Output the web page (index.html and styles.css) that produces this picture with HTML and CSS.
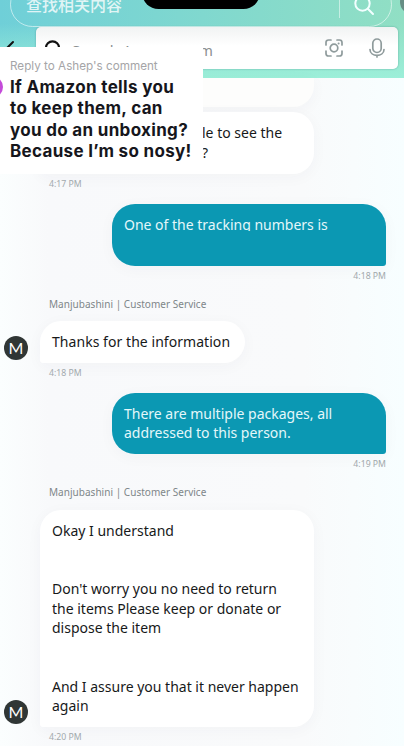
FILE: index.html
```html
<!DOCTYPE html>
<html lang="en">
<head>
  <meta charset="UTF-8">
  <meta name="viewport" content="width=device-width, initial-scale=1.0">
  <title>Customer Service chat</title>
  <link rel="stylesheet" href="styles.css">
</head>
<body>
<div class="phone">
  <header class="header">
    <svg class="back" width="14" height="20" viewBox="0 0 14 20"><path d="M10 3 L3 10 L10 17"/></svg>
    <div class="search">
      <svg class="search-icon" width="22" height="22" viewBox="0 0 22 22"><circle cx="8.500" cy="8" r="6.600"/><path d="M13.500 13 L20 19"/></svg>
      <span class="search-text">Search Amazon.com</span>
      <svg class="scan" width="20" height="20" viewBox="0 0 20 20">
        <path d="M2 7V4.500Q2 2 4.500 2H7M13 2H15.500Q18 2 18 4.500V7M18 13V15.500Q18 18 15.500 18H13M7 18H4.500Q2 18 2 15.500V13"/>
        <circle cx="10" cy="10" r="3.800"/><circle class="dot" cx="14.600" cy="5.600" r="1"/>
      </svg>
      <svg class="mic" width="18" height="22" viewBox="0 0 18 22">
        <rect x="4.800" y="2" width="8.400" height="13.500" rx="4.200"/>
        <path d="M2 12.500C2 20.300 16 20.300 16 12.500M9 18.500V20"/>
      </svg>
    </div>
  </header>

  <main class="chat">
    <div class="bubble previous"></div>
    <div class="bubble first"><span>le to see the</span><br><span>?</span></div>
    <div class="time">4:17 PM</div>

    <div class="bubble mine">One of the tracking numbers is<i class="redact"></i></div>
    <div class="time right">4:18 PM</div>

    <div class="name">Manjubashini | Customer Service</div>
    <div class="row">
      <div class="avatar">M</div>
      <div class="bubble thanks">Thanks for the information</div>
    </div>
    <div class="time">4:18 PM</div>

    <div class="bubble mine">There are multiple packages, all<br>addressed to this person.</div>
    <div class="time right">4:19 PM</div>

    <div class="name">Manjubashini | Customer Service</div>
    <div class="row">
      <div class="avatar">M</div>
      <div class="bubble wide">Okay I understand<br><br><br>Don't worry you no need to return<br>the items Please keep or donate or<br>dispose the item<br><br><br>And I assure you that it never happen<br>again</div>
    </div>
    <div class="time">4:20 PM</div>
  </main>

  <!-- video app controls over the chat -->
  <div class="top-search">
    <span class="top-text">查找相关内容</span>
    <i class="divider"></i>
    <svg width="22" height="22" viewBox="0 0 22 22"><circle cx="9.500" cy="9.500" r="7.200"/><path d="M14.800 14.800 L20 20"/></svg>
  </div>
  <div class="notch"></div>
  <div class="corner"></div>

  <div class="reply">
    <div class="reply-dot"></div>
    <div class="reply-to">Reply to Ashep's comment</div>
    <div class="reply-text">If Amazon tells you<br>to keep them, can<br>you do an unboxing?<br>Because I’m so nosy!</div>
  </div>
</div>
</body>
</html>
```
FILE: styles.css
```css
* {
    box-sizing: border-box;
}
body {
    margin: 0;
    font-family: "Noto Sans", "Noto Sans CJK SC", sans-serif;
}
.phone {
    position: relative;
    width: 404px;
    height: 746px;
    overflow: hidden;
    background: linear-gradient(90deg, #fbfefe 0, #f8f9fb 12%, #f9fafb 75%, #f7feff 100%);
}
svg {
    fill: none;
    stroke-linecap: round;
    flex: none;
}

/* header */
.header {
    display: flex;
    height: 78px;
    padding: 27px 6px 9px 3px;
    background: linear-gradient(180deg, rgba(155, 240, 215, 0) 30%, #9cefd9 100%), linear-gradient(90deg, #6fcfd8, #80d8cf 50%, #91dfc4);
}
.back {
    margin-top: 12px;
    stroke: #111;
    stroke-width: 2;
}
.search {
    display: flex;
    align-items: center;
    flex: 1;
    margin-left: 19px;
    padding: 0 12px 0 8px;
    border-radius: 5px;
    background: linear-gradient(#f1f3f3, #fff 45%);
    box-shadow: 0 0 2px rgba(60, 120, 120, 0.6);
}
.search-icon {
    margin-top: 5px;
    stroke: #111;
    stroke-width: 2.2;
}
.search-text {
    flex: 1;
    margin: 3px 0 0 6px;
    font-size: 14.6px;
    letter-spacing: 0.1px;
    white-space: nowrap;
    color: #8b8f90;
}
.scan, .mic {
    stroke: #8f9b9c;
    stroke-width: 1.7;
}
.scan .dot {
    fill: #8f9b9c;
    stroke: none;
}
.mic {
    margin-left: 24px;
}

/* messages */
.chat {
    display: flex;
    flex-direction: column;
    align-items: flex-start;
}
.bubble {
    padding: 11px 12px;
    border-radius: 21px 21px 21px 3px;
    background: #fff;
    box-shadow: 0 3px 16px rgba(50, 60, 90, 0.035);
    color: #17191a;
    font-size: 14px;
    line-height: 19.5px;
    white-space: nowrap;
}
.previous {
    width: 274px;
    height: 29px;
    margin: 0 0 5px 40px;
    border-radius: 0 0 21px 3px;
    background: #fdfdfc;
}
.first {
    width: 274px;
    height: 62px;
    margin-left: 40px;
    padding-left: 162px;
}
.mine {
    position: relative;
    align-self: flex-end;
    width: 274px;
    height: 61.5px;
    margin: 10px 18px 0 0;
    border-radius: 23px 23px 3px 23px;
    background: #0b98b3;
    color: #e4f7fa;
}
.redact {
    position: absolute;
    left: 12px;
    top: 27px;
    width: 215px;
    height: 12px;
    background: #0b98b3;
}
.row {
    display: flex;
    align-items: flex-end;
    padding-left: 4px;
}
.avatar {
    width: 24px;
    height: 24px;
    margin: 0 12px 3px 0;
    border-radius: 50%;
    background: #303635;
    color: #fff;
    font-family: Lato, sans-serif;
    font-size: 16px;
    line-height: 24px;
    text-align: center;
}
.thanks {
    width: 205px;
    letter-spacing: 0.05px;
}
.wide {
    width: 274px;
}
.time {
    height: 20px;
    margin-left: 49px;
    color: #a2a9ad;
    font-size: 8.7px;
    line-height: 21px;
}
.time.right {
    align-self: flex-end;
    margin: 0 18px 0 0;
}
.name {
    height: 35.5px;
    margin-left: 49px;
    color: #7e8689;
    font-size: 10px;
    letter-spacing: 0.03px;
    line-height: 36px;
}

/* app search bar */
.top-search {
    position: absolute;
    left: 10px;
    top: -18px;
    display: flex;
    align-items: center;
    width: 382px;
    height: 45px;
    padding: 0 16px 0 15px;
    border: 1px solid rgba(255, 255, 255, 0.55);
    border-radius: 23px;
    stroke: #f2ffff;
    stroke-width: 2;
}
.top-text {
    flex: 1;
    margin-top: -2px;
    color: rgba(255, 255, 255, 0.8);
    font-size: 16px;
    font-weight: 500;
}
.divider {
    width: 1px;
    height: 30px;
    margin: -4px 13px 0 0;
    background: rgba(255, 255, 255, 0.5);
}
.notch {
    position: absolute;
    left: 142px;
    top: -24px;
    width: 118px;
    height: 33px;
    border-radius: 17px;
    background: #000;
}
.corner {
    position: absolute;
    left: 400px;
    top: -10px;
    width: 24px;
    height: 24px;
    border-radius: 50%;
    background: #668d84;
}

/* comment sticker */
.reply {
    position: absolute;
    left: 0;
    top: 47px;
    width: 203px;
    height: 127px;
    padding: 11px 0 0 10px;
    overflow: hidden;
    background: #fff;
    white-space: nowrap;
}
.reply-dot {
    position: absolute;
    left: -19px;
    top: 29px;
    width: 22px;
    height: 22px;
    border-radius: 50%;
    background: #c44bd9;
}
.reply-to {
    color: #a5a5a7;
    font-family: Inter, sans-serif;
    font-size: 11.7px;
    line-height: 17px;
}
.reply-text {
    margin-top: 2px;
    color: #16161c;
    font-family: Inter, sans-serif;
    font-size: 17px;
    font-weight: 700;
    letter-spacing: 0.32px;
    line-height: 21.4px;
}
```
